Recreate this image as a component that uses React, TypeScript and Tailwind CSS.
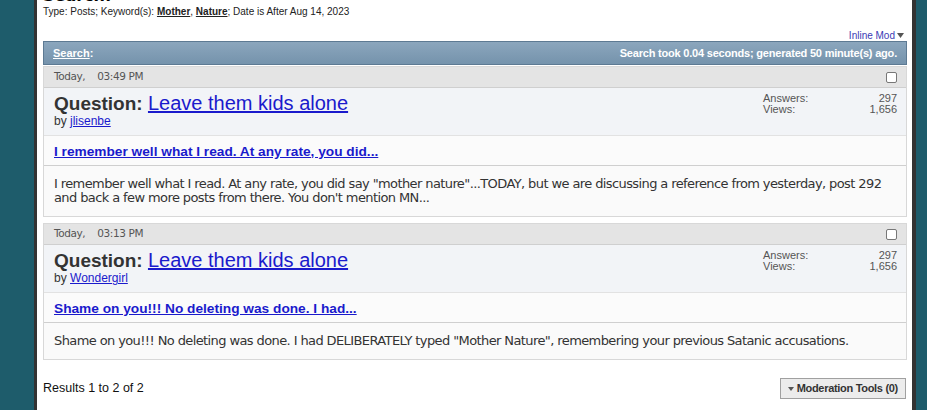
import React from 'react';

const tahoma = { fontFamily: '"DejaVu Sans", Verdana, sans-serif' };
const arial = { fontFamily: '"Liberation Sans", Arial, sans-serif' };

type Post = {
  time: string;
  author: string;
  title: string;
  body: string[];
};

const posts: Post[] = [
  {
    time: '03:49 PM',
    author: 'jlisenbe',
    title: 'I remember well what I read. At any rate, you did...',
    body: [
      'I remember well what I read. At any rate, you did say "mother nature"...TODAY, but we are discussing a reference from yesterday, post 292',
      "and back a few more posts from there. You don't mention MN...",
    ],
  },
  {
    time: '03:13 PM',
    author: 'Wondergirl',
    title: 'Shame on you!!! No deleting was done. I had...',
    body: [
      'Shame on you!!! No deleting was done. I had DELIBERATELY typed "Mother Nature", remembering your previous Satanic accusations.',
    ],
  },
];

function PostCard({ post }: { post: Post }) {
  return (
    <div className="border border-[#d8d8d8]">
      {/* date row */}
      <div className="flex h-[21px] items-center justify-between border-b border-[#cfcfcf] bg-[#e4e4e4] pl-[10px] pr-[9px]">
        <span className="text-[10.5px] tracking-[-0.4px] text-[#555]" style={tahoma}>
          Today,<span className="inline-block w-[12px]" />{post.time}
        </span>
        <span className="h-[11px] w-[11px] rounded-[2px] border border-[#777] bg-white" />
      </div>

      {/* thread title */}
      <div className="flex h-[48px] items-start justify-between border-b border-[#e2e2e2] bg-[#f2f4f7] pl-[10px] pr-[9px] pt-[4px]" style={arial}>
        <div>
          <div className="text-[20px] leading-[22px] text-[#333]">
            <span className="text-[19px] font-bold">Question: </span>
            <a className="text-[#1a1acc] underline">Leave them kids alone</a>
          </div>
          <div className="text-[12px] leading-[13px] text-[#333]">
            by <a className="text-[#1a1acc] underline">{post.author}</a>
          </div>
        </div>
        <div className="grid w-[134px] grid-cols-2 content-start pt-[1px] text-[11px] leading-[11px] text-[#555]">
          <span>Answers:</span>
          <span className="text-right">297</span>
          <span>Views:</span>
          <span className="text-right">1,656</span>
        </div>
      </div>

      {/* post title */}
      <div className="flex h-[30px] items-center border-b border-[#cfcfcf] bg-[#fbfbfb] pl-[10px] pt-[3px]">
        <a className="text-[13.7px] font-bold text-[#1a1acc] underline" style={arial}>
          {post.title}
        </a>
      </div>

      {/* body */}
      <div className="bg-[#fafafa] pb-[11px] pl-[10px] pt-[11px] text-[13px] leading-[14px] tracking-[-0.6px] text-[#333]" style={tahoma}>
        {post.body.map((line, i) => (
          <div key={i} className="whitespace-nowrap">{line}</div>
        ))}
      </div>
    </div>
  );
}

export default function App() {
  return (
    <div className="flex h-[410px] overflow-hidden bg-[#1e5c6b] pl-[34px] pr-[11px]">
      <div className="flex-1 overflow-hidden border-l-[3px] border-r-[4px] border-[#333] bg-white pl-[6px] pr-[5px]">
        {/* search heading (cut off at top) */}
        <div className="-mt-[12px] text-[16px] font-bold leading-[16px] text-black" style={tahoma}>
          Search:
        </div>
        <div className="mt-[1px] text-[10px] leading-[13px] text-[#222]" style={arial}>
          Type: Posts; Keyword(s): <b className="underline">Mother</b>, <b className="underline">Nature</b>; Date is After Aug 14, 2023
        </div>

        <div className="mt-[12px] flex items-center justify-end gap-[2px] pr-[3px] text-[10px] leading-[11px] text-[#3b3bb5]" style={arial}>
          Inline Mod
          <svg width="7" height="5" viewBox="0 0 7 5"><path d="M0 0h7L3.5 5z" fill="#555" /></svg>
        </div>

        {/* search bar */}
        <div className="flex h-[24px] items-center justify-between border border-[#5d7a93] bg-gradient-to-b from-[#8ba6bd] to-[#7593ac] pl-[9px] pr-[9px] text-[11px] font-bold text-white" style={arial}>
          <a className="underline">Search</a>
          <span className="flex-1">:</span>
          <span className="tracking-[-0.2px]">Search took 0.04 seconds; generated 50 minute(s) ago.</span>
        </div>

        <div className="mt-[1px] flex flex-col gap-[6px]">
          {posts.map((p, i) => (
            <PostCard key={i} post={p} />
          ))}
        </div>

        {/* footer */}
        <div className="mt-[18px] flex items-center justify-between">
          <span className="text-[12.5px] text-[#111]" style={arial}>
            Results 1 to 2 of 2
          </span>
          <button className="mr-[1px] flex h-[21px] items-center gap-[3px] border border-[#a0a0a0] bg-[#ececec] px-[7px] text-[11px] font-bold tracking-[-0.3px] text-[#333]" style={arial}>
            <svg width="6" height="4" viewBox="0 0 6 4"><path d="M0 0h6L3 4z" fill="#555" /></svg>
            Moderation Tools (0)
          </button>
        </div>
      </div>
    </div>
  );
}
